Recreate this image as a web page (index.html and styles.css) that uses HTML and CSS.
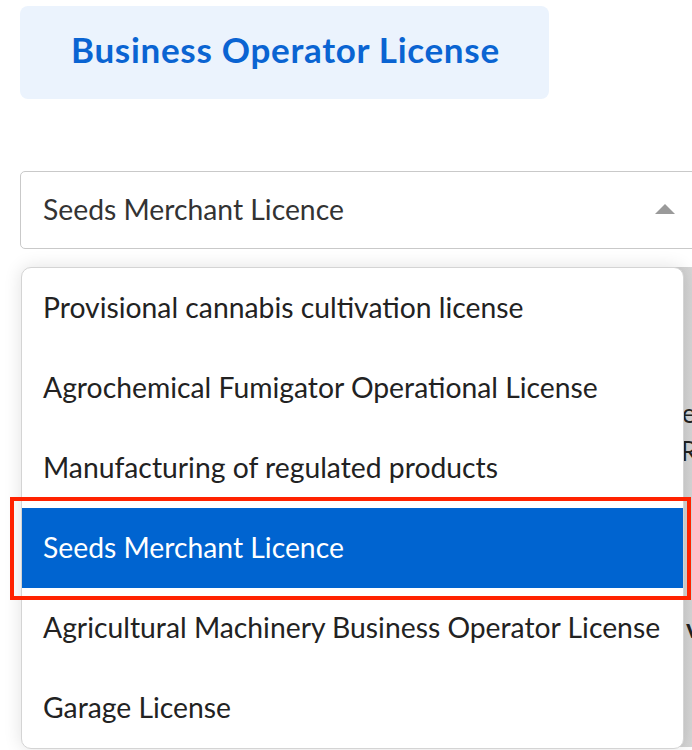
FILE: index.html
```html
<!DOCTYPE html>
<html>
<head>
<meta charset="utf-8">
<link rel="stylesheet" href="styles.css">
</head>
<body>
<div class="page">
  <div class="header"><h1 class="title">Business Operator License</h1></div>
  <div class="select">
    <span class="select-value">Seeds Merchant Licence</span>
    <span class="caret"></span>
  </div>
  <div class="behind">
    <div class="behind-line l1">e</div>
    <div class="behind-line l2">R</div>
    <div class="behind-line l3">v</div>
  </div>
  <ul class="menu">
    <li class="opt">Provisional cannabis cultivation license</li>
    <li class="opt">Agrochemical Fumigator Operational License</li>
    <li class="opt">Manufacturing of regulated products</li>
    <li class="opt selected">Seeds Merchant Licence</li>
    <li class="opt">Agricultural Machinery Business Operator License</li>
    <li class="opt">Garage License</li>
  </ul>
  <div class="highlight-box"></div>
</div>
</body>
</html>
```

FILE: styles.css
```css
html, body {
  margin: 0;
  padding: 0;
  background: #ffffff;
  overflow: hidden;
}
.page {
  position: relative;
  width: 692px;
  height: 750px;
  font-family: Lato, "Noto Sans", sans-serif;
  color: #222222;
  padding: 6px 0 0 20px;
  box-sizing: border-box;
}
.header {
  width: 529px;
  height: 93px;
  background: #ebf3fd;
  border-radius: 8px;
  display: flex;
  align-items: center;
  box-sizing: border-box;
  padding-left: 51px;
  padding-bottom: 7px;
}
.title {
  margin: 0;
  font-size: 35px;
  font-weight: 700;
  color: #0a64d2;
  letter-spacing: 0.7px;
}
.select {
  margin-top: 72px;
  width: 700px;
  height: 78px;
  border: 1px solid #c9c9c9;
  border-radius: 5px;
  box-sizing: border-box;
  display: flex;
  align-items: center;
  padding: 0 44px 2px 22px;
}
.select-value {
  font-size: 28.3px;
  color: #333333;
}
.caret {
  margin-left: auto;
  width: 0;
  height: 0;
  border-left: 10px solid transparent;
  border-right: 10px solid transparent;
  border-bottom: 10px solid #9a9a9a;
}
.behind {
  margin-top: 18px;
  margin-left: 644px;
  width: 28px;
  height: 480px;
  border-radius: 8px 0 0 0;
  background: linear-gradient(to right, #b4b4b4, #cfcfcf 40%, #d6d6d6);
  position: relative;
}
.behind-line {
  position: absolute;
  font-size: 26px;
  color: #222;
  line-height: 1;
}
.l1 { top: 133px; left: 18px; }
.l2 { top: 171px; left: 17px; }
.l3 { top: 348px; left: 22px; font-weight: 700; }
.menu {
  position: absolute;
  left: 21px;
  top: 267px;
  width: 663px;
  margin: 0;
  padding: 0;
  list-style: none;
  background: #ffffff;
  border: 1px solid #d4d4d4;
  border-radius: 10px;
  box-sizing: border-box;
  box-shadow: 0 0 18px rgba(0, 0, 0, 0.12);
  overflow: hidden;
}
.opt {
  height: 80px;
  display: flex;
  align-items: center;
  padding-left: 21px;
  padding-bottom: 3px;
  font-size: 28.3px;
  color: #222222;
  box-sizing: border-box;
}
.opt.selected {
  background: #0064d0;
  color: #ffffff;
}
.highlight-box {
  position: absolute;
  left: 10px;
  top: 497px;
  width: 681px;
  height: 103px;
  border: 4px solid #ff2200;
  box-sizing: border-box;
}
```
